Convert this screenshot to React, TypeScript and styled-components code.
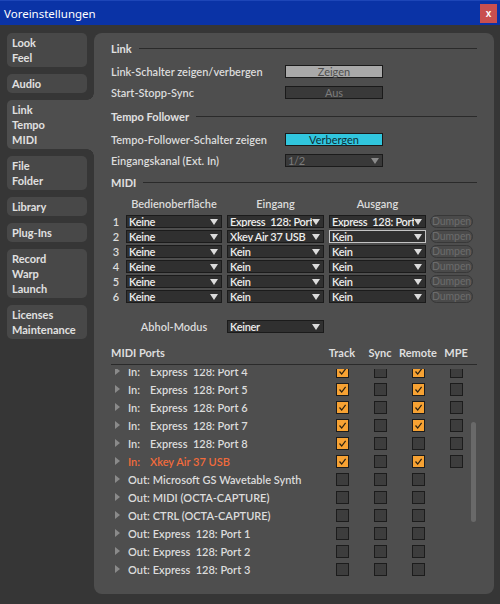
import React from 'react'
import styled, { createGlobalStyle } from 'styled-components'

const GlobalStyle = createGlobalStyle`
  html, body {
    margin: 0;
    padding: 0;
    background: #363636;
  }

  body {
    width: 500px;
    height: 604px;
    overflow: hidden;
    font-family: Lato, 'Liberation Sans', sans-serif;
  }
`

const PANEL = '#4e4e4e'

const Window = styled.div`
  width: 500px;
  height: 604px;
  display: flex;
  flex-direction: column;
  background: #363636;
`

const TitleBar = styled.div`
  height: 25px;
  flex: none;
  display: flex;
  align-items: center;
  justify-content: space-between;
  padding: 0 3px 0 4px;
  background: #0a33a6;
  border-top: 1px solid #1d46b8;
  box-sizing: border-box;
`

const Title = styled.span`
  font-family: 'Noto Sans', sans-serif;
  font-size: 11.5px;
  color: #ffffff;
`

const CloseButton = styled.div`
  width: 17px;
  height: 19px;
  display: flex;
  align-items: center;
  justify-content: center;
  background: #c94f4f;
  color: #ffffff;
  font: bold 10px 'Liberation Sans', sans-serif;
`

const Body = styled.div`
  flex: 1;
  min-height: 0;
  display: flex;
  padding: 8px 6px 10px 7px;
`

const Sidebar = styled.nav`
  width: 87px;
  flex: none;
  display: flex;
  flex-direction: column;
  gap: 7px;
`

const Tab = styled.div<{ $active?: boolean }>`
  position: relative;
  width: ${p => (p.$active ? '87px' : '80px')};
  padding: 2px 5px;
  box-sizing: border-box;
  background: ${p => (p.$active ? PANEL : '#484848')};
  border-radius: ${p => (p.$active ? '5px 0 0 5px' : '5px')};
  font-size: 11px;
  font-weight: 700;
  line-height: 15px;
  color: #e0e0e0;

  ${p =>
    p.$active &&
    `
    &::before, &::after {
      content: '';
      position: absolute;
      right: 0;
      width: 7px;
      height: 7px;
    }
    &::before {
      top: -7px;
      background: radial-gradient(circle at 0 0, transparent 6.5px, ${PANEL} 7px);
    }
    &::after {
      bottom: -7px;
      background: radial-gradient(circle at 0 100%, transparent 6.5px, ${PANEL} 7px);
    }
  `}
`

const Panel = styled.main`
  flex: 1;
  min-width: 0;
  display: flex;
  flex-direction: column;
  padding: 4px 17px 9px 17px;
  background: ${PANEL};
  border-radius: 8px;
  overflow: hidden;
`

const SectionHeader = styled.div<{ $top?: number }>`
  height: 22px;
  flex: none;
  display: flex;
  align-items: center;
  gap: 7px;
  margin-top: ${p => p.$top ?? 0}px;
  margin-bottom: 2px;
  font-size: 11px;
  font-weight: 700;
  color: #e0e0e0;

  &::after {
    content: '';
    flex: 1;
    height: 1px;
    background: #2a2a2a;
  }
`

const SettingRow = styled.div`
  height: 21px;
  flex: none;
  display: grid;
  grid-template-columns: 174px 98px;
  align-items: center;
`

const Label = styled.span`
  font-size: 11px;
  font-weight: 600;
  color: #dcdcdc;
  white-space: nowrap;
`

const tones = {
  light: { bg: '#a9a9a9', fg: '#4e4e4e' },
  dark: { bg: '#393939', fg: '#7c7c7c' },
  cyan: { bg: '#31c6de', fg: '#0f2e37' },
}

const ToggleButton = styled.div<{ $tone: keyof typeof tones }>`
  height: 13px;
  box-sizing: border-box;
  border: 1px solid #1a1a1a;
  background: ${p => tones[p.$tone].bg};
  color: ${p => tones[p.$tone].fg};
  font-size: 11px;
  line-height: 11px;
  text-align: center;
`

const Chooser = styled.div<{ $focus?: boolean; $muted?: boolean }>`
  height: 13px;
  box-sizing: border-box;
  display: flex;
  align-items: center;
  padding: 0 3px 0 2px;
  border: 1px solid ${p => (p.$focus ? '#c4c4c4' : '#1b1b1b')};
  background: ${p => (p.$muted ? '#393939' : '#303030')};
  color: ${p => (p.$muted ? '#7c7c7c' : '#ececec')};
  font-size: 11px;
  font-weight: ${p => (p.$muted ? 400 : 600)};
  line-height: 11px;
`

const ChooserText = styled.span`
  flex: 1;
  min-width: 0;
  overflow: hidden;
  white-space: pre;
  letter-spacing: -0.3px;
`

const Arrow = ({ color = '#dcdcdc' }: { color?: string }) => (
  <svg width="8" height="6" viewBox="0 0 8 6" style={{ flex: 'none' }}>
    <polygon points="0,0 8,0 4,6" fill={color} />
  </svg>
)

const Select = ({ value, focus, muted }: { value: string; focus?: boolean; muted?: boolean }) => (
  <Chooser $focus={focus} $muted={muted}>
    <ChooserText>{value}</ChooserText>
    <Arrow color={muted ? '#8a8a8a' : '#dcdcdc'} />
  </Chooser>
)

const MidiGrid = styled.div`
  display: grid;
  grid-template-columns: 10px 96px 97px 97px 42px;
  grid-auto-rows: 13px;
  column-gap: 5px;
  row-gap: 2px;
  align-items: center;
`

const ColumnHead = styled.div<{ $col: number }>`
  grid-column: ${p => p.$col};
  height: 18px;
  align-self: end;
  font-size: 11px;
  font-weight: 600;
  line-height: 18px;
  color: #dcdcdc;
  text-align: center;
`

const HeadRow = styled(MidiGrid)`
  grid-auto-rows: 18px;
  margin-bottom: 2px;
`

const RowNumber = styled.span`
  font-size: 11px;
  font-weight: 600;
  color: #dcdcdc;
  text-align: center;
`

const DumpButton = styled.div`
  height: 13px;
  margin-left: -1px;
  box-sizing: border-box;
  padding-left: 1px;
  border: 1px solid #383838;
  border-radius: 7px;
  background: #4a4a4a;
  color: #6c6c6c;
  font-size: 10.5px;
  line-height: 11px;
  letter-spacing: -0.1px;
  white-space: nowrap;
`

const ModeRow = styled(MidiGrid)`
  margin-top: 17px;
`

const ModeLabel = styled.span`
  grid-column: 2;
  font-size: 11px;
  font-weight: 600;
  color: #dcdcdc;
  text-align: center;
`

const PortsHeader = styled.div`
  height: 24px;
  flex: none;
  display: grid;
  grid-template-columns: 1fr repeat(4, 38px);
  align-items: center;
  margin-top: 7px;
  padding-right: 2px;
  border-bottom: 1px solid #2a2a2a;
  font-size: 11px;
  font-weight: 700;
  color: #dedede;
`

const PortsHead = styled.span`
  text-align: center;
`

const PortList = styled.div`
  position: relative;
  flex: 1;
  min-height: 0;
  margin-top: 4px;
  overflow: hidden;
`

const PortScroll = styled.div`
  margin-top: -7px;
`

const PortRow = styled.div<{ $hot?: boolean }>`
  height: 18px;
  display: grid;
  grid-template-columns: 1fr repeat(4, 38px);
  align-items: center;
  padding-right: 2px;
  font-size: 11px;
  font-weight: 600;
  color: ${p => (p.$hot ? '#f26b3b' : '#dcdcdc')};
`

const PortName = styled.div`
  display: flex;
  align-items: center;
  white-space: pre;
`

const Disclosure = styled.svg`
  flex: none;
  margin: 0 8px 0 4px;
`

const Direction = styled.span`
  min-width: 22px;
  padding-right: 3px;
  box-sizing: border-box;
`

const Box = styled.div<{ $on?: boolean }>`
  width: 13px;
  height: 13px;
  box-sizing: border-box;
  justify-self: center;
  display: flex;
  align-items: center;
  justify-content: center;
  border: 1px solid #1c1c1c;
  background: ${p => (p.$on ? '#f7a233' : '#3d3d3d')};
`

const ScrollThumb = styled.div`
  position: absolute;
  right: 1px;
  top: 53px;
  width: 5px;
  height: 100px;
  border-radius: 3px;
  background: #696969;
`

const Check = ({ on }: { on?: boolean }) => (
  <Box $on={on}>
    {on && (
      <svg width="9" height="9" viewBox="0 0 9 9">
        <polyline points="1.5,4.5 3.7,7 7.6,1.8" fill="none" stroke="#2b2111" strokeWidth="1.2" />
      </svg>
    )}
  </Box>
)

const tabs = [
  ['Look', 'Feel'],
  ['Audio'],
  ['Link', 'Tempo', 'MIDI'],
  ['File', 'Folder'],
  ['Library'],
  ['Plug-Ins'],
  ['Record', 'Warp', 'Launch'],
  ['Licenses', 'Maintenance'],
]

const midiRows = [
  ['Keine', 'Express  128: Port 4', 'Express  128: Port 4'],
  ['Keine', 'Xkey Air 37 USB', 'Kein'],
  ['Keine', 'Kein', 'Kein'],
  ['Keine', 'Kein', 'Kein'],
  ['Keine', 'Kein', 'Kein'],
  ['Keine', 'Kein', 'Kein'],
]

type Port = { dir: 'In:' | 'Out:'; name: string; track?: boolean; remote?: boolean; hot?: boolean }

const ports: Port[] = [
  { dir: 'In:', name: 'Express  128: Port 4', track: true, remote: true },
  { dir: 'In:', name: 'Express  128: Port 5', track: true, remote: true },
  { dir: 'In:', name: 'Express  128: Port 6', track: true, remote: true },
  { dir: 'In:', name: 'Express  128: Port 7', track: true, remote: true },
  { dir: 'In:', name: 'Express  128: Port 8', track: true },
  { dir: 'In:', name: 'Xkey Air 37 USB', track: true, remote: true, hot: true },
  { dir: 'Out:', name: 'Microsoft GS Wavetable Synth' },
  { dir: 'Out:', name: 'MIDI (OCTA-CAPTURE)' },
  { dir: 'Out:', name: 'CTRL (OCTA-CAPTURE)' },
  { dir: 'Out:', name: 'Express  128: Port 1' },
  { dir: 'Out:', name: 'Express  128: Port 2' },
  { dir: 'Out:', name: 'Express  128: Port 3' },
]

export default function App() {
  return (
    <Window>
      <GlobalStyle />
      <TitleBar>
        <Title>Voreinstellungen</Title>
        <CloseButton>x</CloseButton>
      </TitleBar>

      <Body>
        <Sidebar>
          {tabs.map((lines, i) => (
            <Tab key={i} $active={i === 2}>
              {lines.map(l => (
                <div key={l}>{l}</div>
              ))}
            </Tab>
          ))}
        </Sidebar>

        <Panel>
          <SectionHeader>Link</SectionHeader>
          <SettingRow>
            <Label>Link-Schalter zeigen/verbergen</Label>
            <ToggleButton $tone="light">Zeigen</ToggleButton>
          </SettingRow>
          <SettingRow>
            <Label>Start-Stopp-Sync</Label>
            <ToggleButton $tone="dark">Aus</ToggleButton>
          </SettingRow>

          <SectionHeader $top={2}>Tempo Follower</SectionHeader>
          <SettingRow>
            <Label>Tempo-Follower-Schalter zeigen</Label>
            <ToggleButton $tone="cyan">Verbergen</ToggleButton>
          </SettingRow>
          <SettingRow>
            <Label>Eingangskanal (Ext. In)</Label>
            <Select value="1/2" muted />
          </SettingRow>

          <SectionHeader>MIDI</SectionHeader>
          <HeadRow>
            <ColumnHead $col={2}>Bedienoberfläche</ColumnHead>
            <ColumnHead $col={3}>Eingang</ColumnHead>
            <ColumnHead $col={4}>Ausgang</ColumnHead>
          </HeadRow>
          <MidiGrid>
            {midiRows.map((row, i) => (
              <React.Fragment key={i}>
                <RowNumber>{i + 1}</RowNumber>
                <Select value={row[0]} />
                <Select value={row[1]} />
                <Select value={row[2]} focus={i === 1} />
                <DumpButton>Dumpen</DumpButton>
              </React.Fragment>
            ))}
          </MidiGrid>

          <ModeRow>
            <ModeLabel>Abhol-Modus</ModeLabel>
            <Select value="Keiner" />
          </ModeRow>

          <PortsHeader>
            <span>MIDI Ports</span>
            <PortsHead>Track</PortsHead>
            <PortsHead>Sync</PortsHead>
            <PortsHead>Remote</PortsHead>
            <PortsHead>MPE</PortsHead>
          </PortsHeader>

          <PortList>
            <PortScroll>
              {ports.map(p => (
                <PortRow key={p.dir + p.name} $hot={p.hot}>
                  <PortName>
                    <Disclosure width="5" height="8" viewBox="0 0 5 8">
                      <polygon points="0,0 5,4 0,8" fill="#8a8a8a" />
                    </Disclosure>
                    <Direction>{p.dir}</Direction>
                    {p.name}
                  </PortName>
                  <Check on={p.track} />
                  <Check />
                  <Check on={p.remote} />
                  {p.dir === 'In:' ? <Check /> : <span />}
                </PortRow>
              ))}
            </PortScroll>
            <ScrollThumb />
          </PortList>
        </Panel>
      </Body>
    </Window>
  )
}
